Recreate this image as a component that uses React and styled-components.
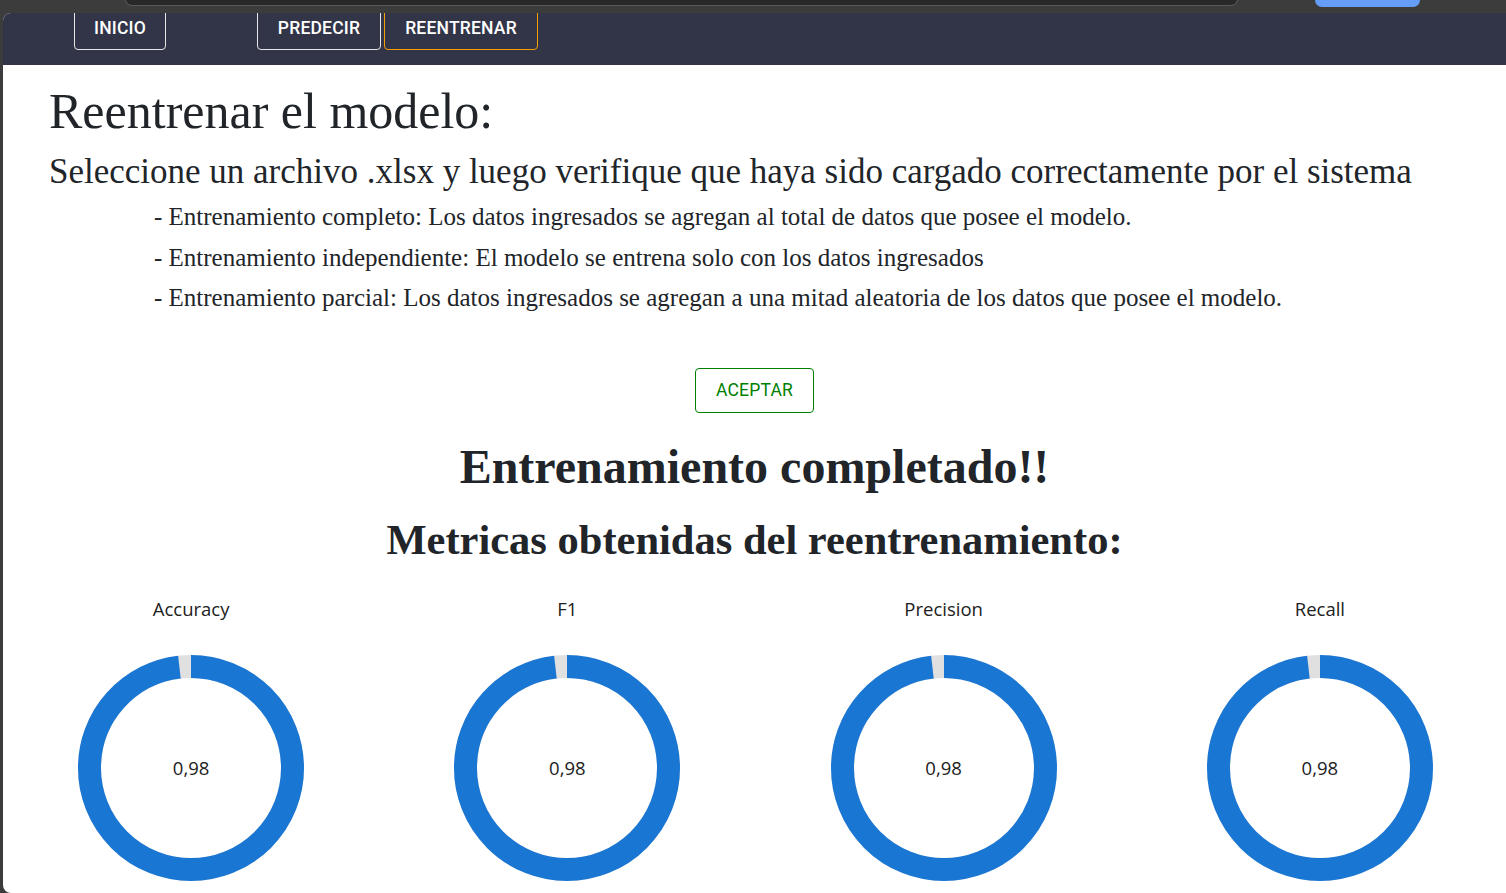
import styled, { createGlobalStyle } from "styled-components";

const GlobalStyle = createGlobalStyle`
    html, body {
        margin: 0;
        padding: 0;
        background: #3c3c3c;
        overflow: hidden;
    }
`

const Chrome = styled.div`
    display: flex;
    height: 13px;
    padding-left: 125px;
`

const AddressBar = styled.div`
    width: 1111px;
    height: 6px;
    margin-top: -1px;
    background: #282828;
    border: 1px solid #5a5a5a;
    border-top: none;
    border-radius: 0 0 10px 10px;
`

const BlueButton = styled.div`
    width: 105px;
    height: 7px;
    margin-left: 77px;
    background: #669df6;
    border-radius: 0 0 9px 9px;
`

const Page = styled.div`
    margin-left: 3px;
    height: 880px;
    background: #ffffff;
    border-radius: 8px 0 0 8px;
    overflow: hidden;
`

const NavBar = styled.nav`
    display: flex;
    align-items: flex-end;
    height: 52px;
    padding: 0 0 15px 71px;
    box-sizing: border-box;
    background: #323447;
    overflow: hidden;
`

const NavButton = styled.button`
    height: 50px;
    padding: 6px 0 0;
    width: ${props => props.width}px;
    margin-left: ${props => props.gap || 0}px;
    background: transparent;
    color: #ffffff;
    border: 1px solid ${props => props.active ? "#f5a000" : "#e6e6e6"};
    border-radius: 4px;
    font-family: Roboto, "Liberation Sans", sans-serif;
    font-weight: 500;
    font-size: 17.5px;
    letter-spacing: 0.2px;
    box-sizing: border-box;
`

const Content = styled.main`
    padding: 20px 0 0 46px;
    color: #212529;
    font-family: "Liberation Serif", "Times New Roman", serif;
`

const Title = styled.h1`
    margin: 0;
    font-weight: 400;
    font-size: 50px;
    line-height: 52px;
`

const Subtitle = styled.h2`
    margin: 15px 0 0;
    font-weight: 400;
    font-size: 35px;
    line-height: 40px;
    white-space: nowrap;
`

const OptionList = styled.div`
    margin: 5px 0 0 105px;
`

const Option = styled.p`
    margin: 0;
    font-size: 25px;
    line-height: 40.5px;
`

const Centered = styled.div`
    display: flex;
    flex-direction: column;
    align-items: center;
    margin-left: -46px;
`

const AcceptButton = styled.button`
    margin-top: 49px;
    width: 119px;
    height: 45px;
    background: #ffffff;
    color: #008000;
    border: 1px solid #008000;
    border-radius: 4px;
    font-family: Roboto, "Liberation Sans", sans-serif;
    font-weight: 400;
    font-size: 17.5px;
    letter-spacing: 0.2px;
`

const Done = styled.h2`
    margin: 27px 0 0;
    font-size: 48px;
    line-height: 54px;
    font-weight: 700;
`

const MetricsTitle = styled.h3`
    margin: 21px 0 0;
    font-size: 42.5px;
    line-height: 50px;
    font-weight: 700;
`

const Charts = styled.div`
    display: grid;
    grid-template-columns: repeat(4, 1fr);
    margin: 32px -2px 0 -46px;
`

const Chart = styled.div`
    display: flex;
    flex-direction: column;
    align-items: center;
    font-family: "Open Sans", "Noto Sans", sans-serif;
    color: #212121;
`

const ChartLabel = styled.div`
    font-size: 18.5px;
    line-height: 24px;
`

const Ring = styled.div`
    position: relative;
    width: 226px;
    height: 226px;
    margin-top: 34px;
`

const RingValue = styled.div`
    position: absolute;
    inset: 0;
    display: flex;
    align-items: center;
    justify-content: center;
    font-size: 18.5px;
`

const metrics = [
    { name: "Accuracy", value: 0.98 },
    { name: "F1", value: 0.98 },
    { name: "Precision", value: 0.98 },
    { name: "Recall", value: 0.98 },
]

const Donut = ({ value }) => {
    const r = 101.5
    const c = 2 * Math.PI * r
    return (
        <Ring>
            <svg width="226" height="226" viewBox="0 0 226 226">
                <circle cx="113" cy="113" r={r} fill="none" stroke="#e0e0e0" strokeWidth="23" />
                <circle
                    cx="113"
                    cy="113"
                    r={r}
                    fill="none"
                    stroke="#1976d2"
                    strokeWidth="23"
                    strokeDasharray={`${c * value} ${c}`}
                    transform="rotate(-90 113 113)"
                />
            </svg>
            <RingValue>{value.toFixed(2).replace(".", ",")}</RingValue>
        </Ring>
    )
}

const App = () => {
    return (
        <>
            <GlobalStyle />
            <Chrome>
                <AddressBar />
                <BlueButton />
            </Chrome>
            <Page>
                <NavBar>
                    <NavButton width={92}>INICIO</NavButton>
                    <NavButton width={124} gap={91}>PREDECIR</NavButton>
                    <NavButton width={154} gap={3} active>REENTRENAR</NavButton>
                </NavBar>
                <Content>
                    <Title>Reentrenar el modelo:</Title>
                    <Subtitle>Seleccione un archivo .xlsx y luego verifique que haya sido cargado correctamente por el sistema</Subtitle>
                    <OptionList>
                        <Option>- Entrenamiento completo: Los datos ingresados se agregan al total de datos que posee el modelo.</Option>
                        <Option>- Entrenamiento independiente: El modelo se entrena solo con los datos ingresados</Option>
                        <Option>- Entrenamiento parcial: Los datos ingresados se agregan a una mitad aleatoria de los datos que posee el modelo.</Option>
                    </OptionList>
                    <Centered>
                        <AcceptButton>ACEPTAR</AcceptButton>
                        <Done>Entrenamiento completado!!</Done>
                        <MetricsTitle>Metricas obtenidas del reentrenamiento:</MetricsTitle>
                    </Centered>
                    <Charts>
                        {metrics.map(m => (
                            <Chart key={m.name}>
                                <ChartLabel>{m.name}</ChartLabel>
                                <Donut value={m.value} />
                            </Chart>
                        ))}
                    </Charts>
                </Content>
            </Page>
        </>
    )
}

export default App;
